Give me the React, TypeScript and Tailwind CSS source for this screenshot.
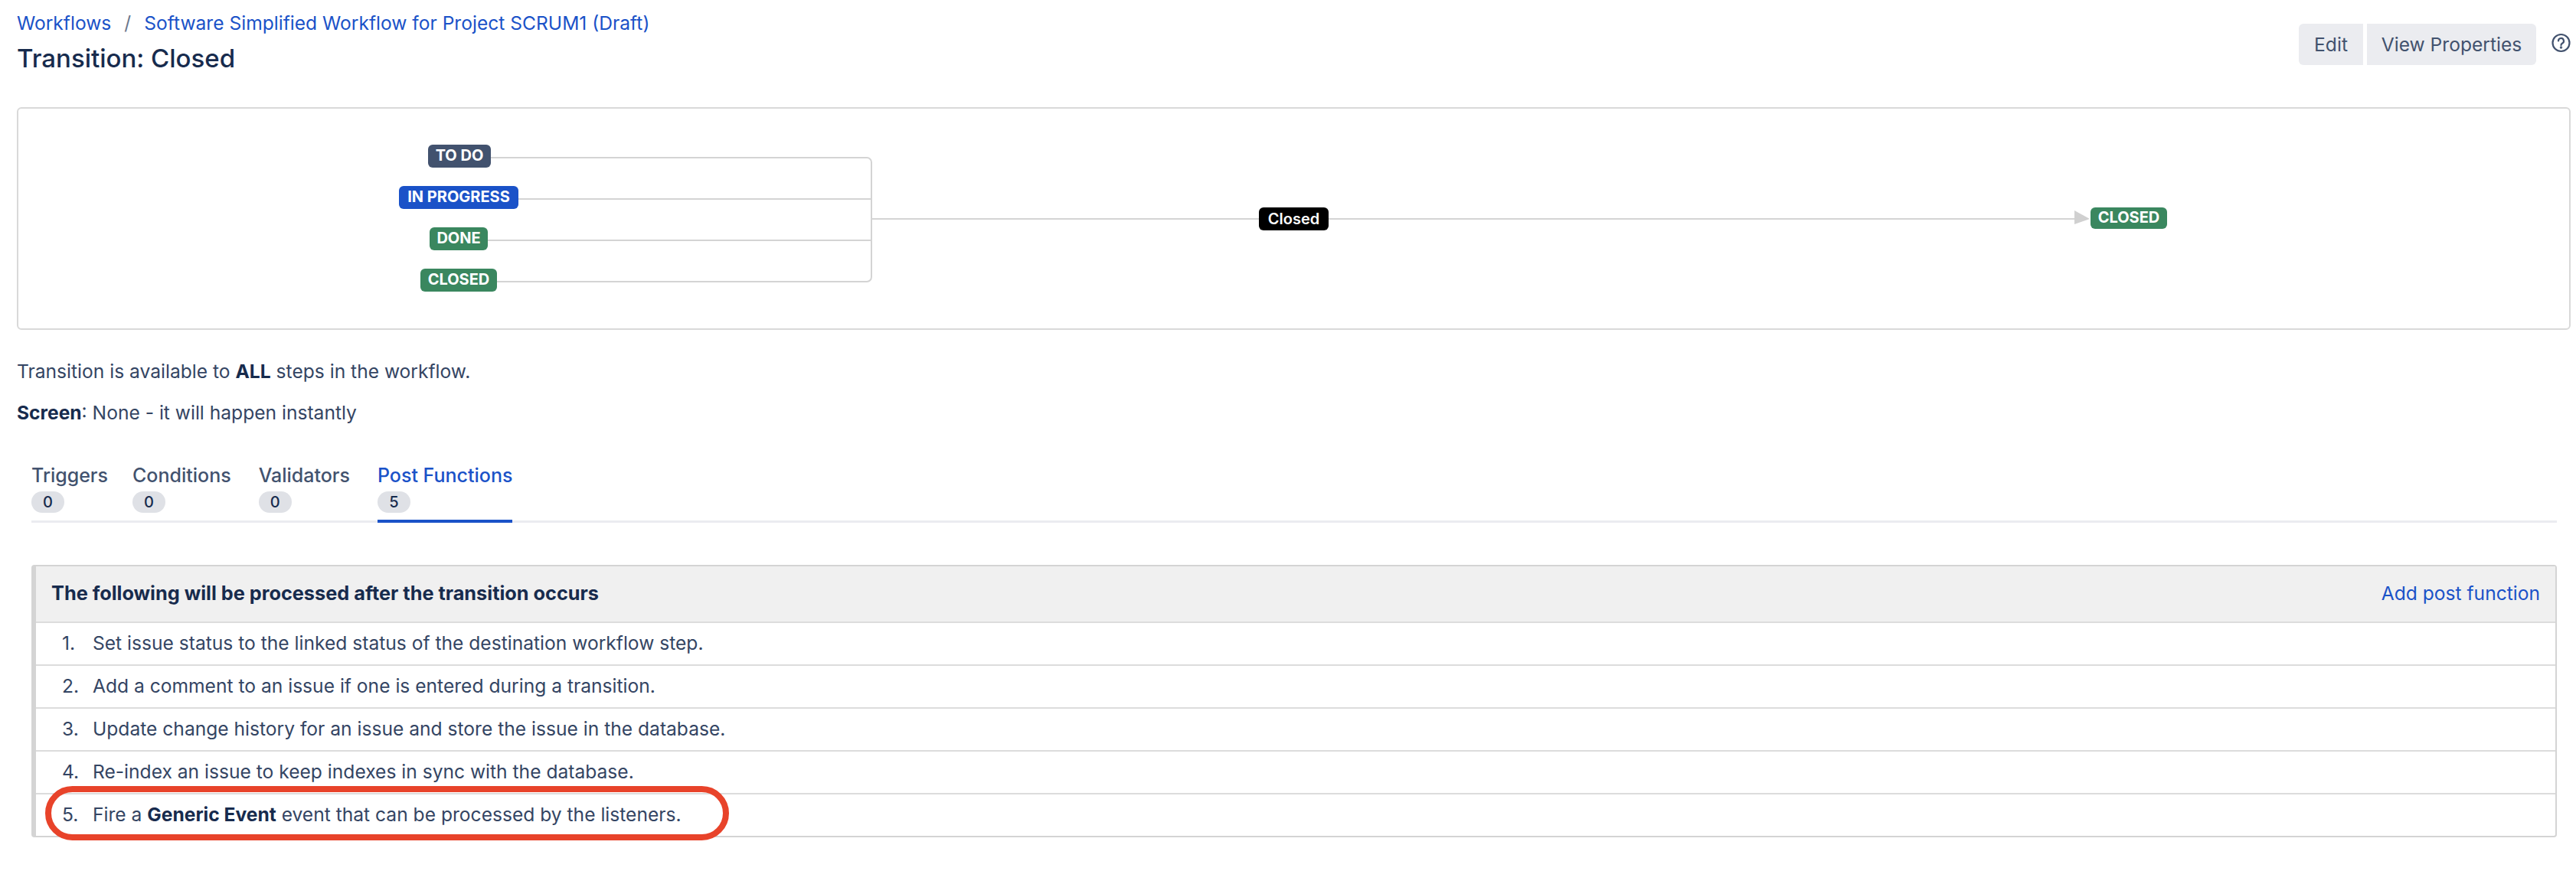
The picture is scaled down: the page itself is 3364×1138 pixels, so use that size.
import type { ReactNode } from "react";

const rows: ReactNode[] = [
  "Set issue status to the linked status of the destination workflow step.",
  "Add a comment to an issue if one is entered during a transition.",
  "Update change history for an issue and store the issue in the database.",
  "Re-index an issue to keep indexes in sync with the database.",
  <>
    Fire a <strong className="font-bold text-[#172b4d]">Generic Event</strong> event that can be processed by the listeners.
  </>,
];

const tabs = [
  { label: "Triggers", count: 0, width: "w-[96px]" },
  { label: "Conditions", count: 0, width: "" },
  { label: "Validators", count: 0, width: "" },
  { label: "Post Functions", count: 5, width: "", active: true },
];

function TransitionDiagram() {
  return (
    <div className="relative mt-[36px] h-[291px] w-[3335px] rounded-md border-2 border-[#d9d9d9]">
      {/* wires */}
      <svg className="absolute left-[-2px] top-[-2px]" width="3335" height="291" fill="none" stroke="#d4d4d4" strokeWidth="2">
        <path d="M619 66H1110a6 6 0 0 1 6 6V222a6 6 0 0 1-6 6H626" />
        <path d="M654 120H1116" />
        <path d="M614 174H1116" />
        <path d="M1116 146H2690" />
        <path d="M2687 135L2707 146L2687 153Z" fill="#d0d0d0" stroke="none" />
      </svg>

      <span className="absolute left-[535px] top-[47px] flex h-[30px] w-[82px] items-center justify-center rounded-md bg-[#42526e] pb-[2px] text-[20px] font-bold text-white">TO DO</span>
      <span className="absolute left-[497px] top-[101px] flex h-[30px] w-[156px] items-center justify-center rounded-md bg-[#1a52c8] pb-[2px] text-[20px] font-bold text-white">IN PROGRESS</span>
      <span className="absolute left-[537px] top-[155px] flex h-[30px] w-[76px] items-center justify-center rounded-md bg-[#3a875f] pb-[2px] text-[20px] font-bold text-white">DONE</span>
      <span className="absolute left-[525px] top-[209px] flex h-[30px] w-[100px] items-center justify-center rounded-md bg-[#3a875f] pb-[2px] text-[20px] font-bold text-white">CLOSED</span>
      <span className="absolute left-[1620px] top-[129px] flex h-[30px] w-[91px] items-center justify-center rounded-md bg-black text-[20px] font-semibold text-white">Closed</span>
      <span className="absolute left-[2706px] top-[129px] flex h-[28px] w-[100px] items-center justify-center rounded-md bg-[#3a875f] pb-[2px] text-[20px] font-bold text-white">CLOSED</span>
    </div>
  );
}

export default function App() {
  return (
    <div className="min-h-screen bg-white pl-[22px] pr-[7px] font-['Inter',sans-serif] text-[24.6px] text-[#344563]">
      {/* Header */}
      <div className="flex justify-between">
        <div className="pt-[12px]">
          <div className="flex h-[36px] items-center text-[#1a52c8]">
            <a>Workflows</a>
            <span className="mx-[17px] text-[#6b778c]">/</span>
            <a>Software Simplified Workflow for Project SCRUM1 (Draft)</a>
          </div>
          <h1 className="mt-[4px] pb-[4px] text-[33px] font-medium leading-[48px] text-[#172b4d]">Transition: Closed</h1>
        </div>
        <div className="flex items-start pt-[31px]">
          <button className="h-[54px] w-[84px] rounded-l-md bg-[#ebecf0] text-[#42526e]">Edit</button>
          <button className="ml-[5px] h-[54px] w-[221px] rounded-r-md bg-[#ebecf0] text-[#42526e]">View Properties</button>
          <svg className="ml-[20px] mt-[12px]" width="25" height="26" viewBox="0 0 25 26" fill="none" stroke="#42526e" strokeWidth="2.2">
            <circle cx="12.5" cy="13" r="11" />
            <path d="M9 10.5a3.5 3.5 0 1 1 5.2 3c-1.2.7-1.7 1.3-1.7 2.5" strokeLinecap="round" />
            <circle cx="12.5" cy="19" r="0.6" fill="#42526e" />
          </svg>
        </div>
      </div>

      <TransitionDiagram />

      {/* Summary */}
      <p className="mt-[36px] leading-[36px]">
        Transition is available to <strong className="font-bold text-[#172b4d]">ALL</strong> steps in the workflow.
      </p>
      <p className="mt-[18px] leading-[36px]">
        <strong className="font-bold text-[#172b4d]">Screen</strong>: None - it will happen instantly
      </p>

      {/* Tabs */}
      <div className="ml-[19px] mr-[18px] flex gap-[36px] border-b-[3px] border-[#ebecf0] pt-[47px]">
        {tabs.map((tab) => (
          <div key={tab.label} className={tab.active ? "-mb-[3px] border-b-[4px] border-[#1a52c8] pb-[9px]" : `pb-[10px] ${tab.width}`}>
            <div className={tab.active ? "h-[36px] text-[25px] font-medium leading-[34px] text-[#1a52c8]" : "h-[36px] whitespace-nowrap text-[25px] font-medium leading-[34px] text-[#42526e]"}>{tab.label}</div>
            <div className="mt-[2px] flex h-[28px] w-[43px] items-center justify-center rounded-full bg-[#dfe1e6] text-[20px] font-medium text-[#172b4d]">{tab.count}</div>
          </div>
        ))}
      </div>

      {/* Post functions table */}
      <div className="relative ml-[19px] mr-[18px] mt-[55px] rounded-sm border-2 border-l-[6px] border-[#d4d4d4]">
        <div className="flex h-[72px] items-center justify-between bg-[#f0f0f0] pb-[2px] pl-[20px] pr-[20px]">
          <span className="text-[25.3px] font-bold text-[#172b4d]">The following will be processed after the transition occurs</span>
          <a className="text-[#1a52c8]">Add post function</a>
        </div>
        {rows.map((row, i) => (
          <div key={i} className="flex h-[56px] items-center border-t-2 border-[#dcdcdc] pb-[2px] pl-[34px]">
            <span className="w-[40px]">{i + 1}.</span>
            <span>{row}</span>
          </div>
        ))}
        {/* Red callout */}
        <div className="absolute left-[12px] top-[287px] h-[71px] w-[893px] rounded-[36px] border-[8px] border-[#e8432a]" />
      </div>
    </div>
  );
}
